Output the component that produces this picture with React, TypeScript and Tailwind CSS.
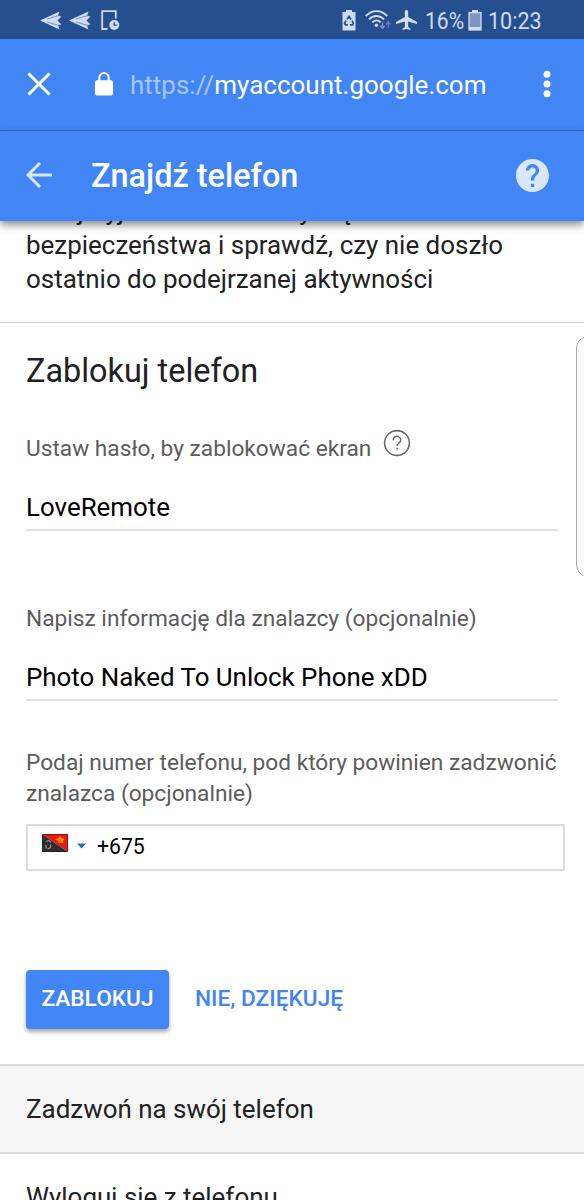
import { useState } from "react";

interface FieldProps {
  label: string;
  value: string;
  onChange: (value: string) => void;
  help?: boolean;
}

function SendIcon() {
  return (
    <svg width="22" height="19" viewBox="0 0 22 19">
      <path d="M0 9.5 19.5 0.5 18 5 21.5 5.5 17.5 9.5 21.5 13.5 18 14 19.5 18.5Z" fill="#cfdcf1" />
      <path d="M7 8 19.5 4.3M7 11 19.5 14.7" stroke="#5f80b4" strokeWidth="0.8" />
    </svg>
  );
}

function DeviceIcon() {
  return (
    <svg width="19" height="21" viewBox="0 0 19 21" fill="none">
      <path d="M6.5 19H1.2V1.2H14.8V8.5" stroke="#cfdcf1" strokeWidth="1.8" />
      <circle cx="13.3" cy="15" r="5" fill="#cfdcf1" />
      <path d="M13.2 12.3V15.2H15.8" stroke="#264f8f" strokeWidth="1.3" />
    </svg>
  );
}

function RecycleBattery() {
  return (
    <svg width="14" height="21" viewBox="0 0 14 21">
      <path d="M4 0H10V2H13.5V20.5H0.5V2H4Z" fill="#cfdcf1" />
      <g stroke="#264f8f" strokeWidth="1.7" fill="none">
        <path d="M4.9 9.4 7 6.4 9.1 9.4" />
        <path d="M10 10.6 11.4 13.2 10.6 14.8H8" />
        <path d="M4 10.6 2.6 13.2 3.4 14.8H6" />
      </g>
    </svg>
  );
}

function WifiIcon() {
  return (
    <svg width="27" height="20" viewBox="0 0 27 20" fill="none">
      <g stroke="#cfdcf1" strokeWidth="1.9">
        <path d="M0.8 6.2C7 -0.6 16 -0.6 22.2 6.2" />
        <path d="M4 9.4C8.5 4.8 14.5 4.8 19 9.4" />
        <path d="M7.3 12.4C10 9.7 13 9.7 15.7 12.4" />
      </g>
      <circle cx="11.4" cy="15.2" r="1.7" fill="#cfdcf1" />
      <path d="M17.5 12.5V18M15.3 15.8 17.5 18.4 19.7 15.8" stroke="#7d98c4" strokeWidth="1.4" />
      <path d="M23.3 18V12M21.1 14.4 23.3 11.8 25.5 14.4" stroke="#5f80b4" strokeWidth="1.4" />
    </svg>
  );
}

function PlaneIcon() {
  return (
    <svg width="21" height="20" viewBox="2 2 19 20" preserveAspectRatio="none">
      <path d="M21 16v-2l-8-5V3.5a1.5 1.5 0 0 0-3 0V9l-8 5v2l8-2.5V19l-2 1.5V22l3.5-1 3.5 1v-1.5L13 19v-5.5z" fill="#cfdcf1" />
    </svg>
  );
}

function BatteryIcon() {
  return (
    <svg width="14" height="21" viewBox="0 0 14 21">
      <path d="M4 0H10V2H13.5V20.5H0.5V2H4Z" fill="#7d95bf" />
      <path d="M4 0H10V2H13.5V20.5H0.5V2H4Z M1.7 3.2V17H12.3V3.2Z" fill="#cfdcf1" fillRule="evenodd" />
    </svg>
  );
}

function Flag() {
  return (
    <svg width="26" height="18" viewBox="0 0 26 18">
      <path d="M0 0H26V18Z" fill="#e61c12" />
      <path d="M0 0V18H26Z" fill="#302f2e" />
      <path d="M13 5.5 16 4.5 18 2 19.5 4 22.5 5 21 7 21.5 9.5 18.5 8.5 16 9 16.5 7Z" fill="#fb8a15" />
      <path d="M4 7.5 7 6.5 9 8.5M8.5 10.5V13.5L5.5 15M3.8 11 4.5 14.5" stroke="#8c8c8c" strokeWidth="1.3" fill="none" />
      <path d="M0.5 0.5H25.5V17.5H0.5Z" fill="none" stroke="#000" strokeOpacity="0.35" />
    </svg>
  );
}

function Field({ label, value, onChange, help }: FieldProps) {
  return (
    <label className="block">
      <span className="flex h-[31px] items-center text-[22.7px] leading-[31px] text-[#5c5c5c]">
        {label}
        {help && (
          <svg width="28" height="28" viewBox="0 0 28 28" fill="none" className="relative -top-[6px] ml-3">
            <circle cx="14" cy="14" r="12.4" stroke="#6a6a6a" strokeWidth="1.6" />
            <path d="M10.3 11.4A3.7 3.7 0 1 1 16.7 13.4C15 14.8 14.1 15.2 14.1 17" stroke="#6a6a6a" strokeWidth="1.5" />
            <path d="M13.3 18.8H14.9V20.4H13.3Z" fill="#6a6a6a" />
          </svg>
        )}
      </span>
      <input
        className="mt-[23px] block h-[44px] w-full border-b-2 border-[#e0e0e0] bg-transparent pb-[2px] text-[25.9px] text-black outline-none"
        value={value}
        onChange={(e) => onChange(e.target.value)}
      />
    </label>
  );
}

export default function App() {
  const [password, setPassword] = useState("LoveRemote");
  const [message, setMessage] = useState("Photo Naked To Unlock Phone xDD");
  const [phone, setPhone] = useState("+675");

  return (
    <div className="relative flex h-[1200px] w-[584px] flex-col overflow-hidden bg-white font-[Roboto,sans-serif] text-[#212121]">
      {/* Status bar */}
      <div className="flex h-[39px] shrink-0 items-center bg-[#264f8f] pl-10 pt-px text-[#cfdcf1]">
        <div className="flex items-center gap-[7px]">
          <SendIcon />
          <SendIcon />
          <span className="ml-[3px]"><DeviceIcon /></span>
        </div>
        <div className="ml-auto flex w-[242px] items-center">
          <RecycleBattery />
          <span className="ml-[9px]"><WifiIcon /></span>
          <span className="ml-[4px]"><PlaneIcon /></span>
          <span className="ml-[8px] w-[38px] origin-left scale-x-[0.86] whitespace-nowrap pt-[2px] text-[24.5px]">16%</span>
          <span className="ml-[5px]"><BatteryIcon /></span>
          <span className="ml-[6px] w-[54px] origin-left scale-x-[0.88] whitespace-nowrap pt-[2px] text-[24.5px]">10:23</span>
        </div>
      </div>

      {/* Address bar */}
      <div className="flex h-[92px] shrink-0 items-center border-b border-[#2f63c0] bg-[#4285f4] pl-[27px] pr-[33px]">
        <svg width="24" height="24" viewBox="0 0 24 24" fill="none" className="-mt-px">
          <path d="M1.5 1.5 22.5 22.5M22.5 1.5 1.5 22.5" stroke="#fff" strokeWidth="3" />
        </svg>
        <svg width="18" height="24" viewBox="0 0 18 24" className="-mt-[2px] ml-[44px]">
          <path d="M4.3 9V5.7a4.7 4.7 0 0 1 9.4 0V9" stroke="#fff" strokeWidth="2" fill="none" />
          <rect y="8.2" width="18" height="15.3" rx="2" fill="#fff" />
        </svg>
        <span className="ml-[17px] whitespace-nowrap pt-[2px] text-[26px] text-white">
          <span className="text-[#a5c6fb]">https://</span>myaccount.google.com
        </span>
        <svg width="8" height="28" viewBox="0 0 8 28" fill="#fff" className="-mt-px ml-auto">
          <circle cx="4" cy="4.2" r="3.5" />
          <circle cx="4" cy="14" r="3.5" />
          <circle cx="4" cy="23.8" r="3.5" />
        </svg>
      </div>

      {/* Page header */}
      <div className="z-10 flex h-[90px] shrink-0 items-center bg-[#4285f4] pb-[2px] pl-[26px] pr-[35px] shadow-[0_4px_8px_rgba(0,0,0,0.45)]">
        <svg width="26" height="26" viewBox="0 0 26 26" fill="none">
          <path d="M26 13H2M14 1 2 13 14 25" stroke="#d9e7fd" strokeWidth="3" />
        </svg>
        <h1 className="ml-[39px] pt-[2px] text-[32.4px] font-medium text-white">Znajdź telefon</h1>
        <svg width="33" height="33" viewBox="2 2 20 20" className="ml-auto">
          <path d="M12 2C6.48 2 2 6.48 2 12s4.48 10 10 10 10-4.48 10-10S17.52 2 12 2zm1 17h-2v-2h2v2zm2.07-7.75l-.9.92C13.45 12.9 13 13.5 13 15h-2v-.5c0-1.1.45-2.1 1.17-2.83l1.24-1.26c.37-.36.59-.86.59-1.41 0-1.1-.9-2-2-2s-2 .9-2 2H8c0-2.21 1.79-4 4-4s4 1.79 4 4c0 .88-.36 1.68-.93 2.25z" fill="#d9e7fd" />
        </svg>
      </div>

      {/* Security tip, partly scrolled under the header */}
      <div className="-mt-[27px] h-[129px] shrink-0 border-b border-[#d2d2d2] px-[26px]">
        <p className="whitespace-nowrap text-[25.95px] leading-[34px]">
          Przejrzyj ustawienia dotyczące
          <br />
          bezpieczeństwa i sprawdź, czy nie doszło
          <br />
          ostatnio do podejrzanej aktywności
        </p>
      </div>

      {/* Lock form */}
      <div className="h-[743px] shrink-0 border-b-2 border-[#dbdbdb] px-[26px] pt-[27px]">
        <h2 className="text-[32.4px] leading-[42px]">Zablokuj telefon</h2>
        <div className="mt-[41px]">
          <Field label="Ustaw hasło, by zablokować ekran" value={password} onChange={setPassword} help />
        </div>
        <div className="mt-[72px]">
          <Field label="Napisz informację dla znalazcy (opcjonalnie)" value={message} onChange={setMessage} />
        </div>
        <p className="mt-[46px] whitespace-nowrap text-[22.7px] leading-[31px] text-[#5c5c5c]">
          Podaj numer telefonu, pod który powinien zadzwonić
          <br />
          znalazca (opcjonalnie)
        </p>
        <div className="mt-[15px] flex h-[47px] w-[539px] items-center border-2 border-[#dcdcdc] pl-[14px]">
          <span className="-mt-[9px]"><Flag /></span>
          <svg width="9" height="6" viewBox="0 0 9 6" className="-mt-[3px] ml-[9px]">
            <path d="M0 0.5H9L4.5 5.5Z" fill="#2f68bd" />
          </svg>
          <input
            className="ml-[11px] w-[300px] bg-transparent pb-[2px] text-[21.2px] text-black outline-none"
            value={phone}
            onChange={(e) => setPhone(e.target.value)}
          />
        </div>
        <div className="mt-[99px] flex items-center">
          <button className="h-[59px] w-[143px] rounded bg-[#4285f4] pb-px text-[22.7px] font-medium text-white shadow-[0_3px_4px_rgba(0,0,0,0.35)]">
            ZABLOKUJ
          </button>
          <button className="ml-[26px] whitespace-nowrap pb-px text-[22.7px] font-medium text-[#4285f4]">NIE, DZIĘKUJĘ</button>
        </div>
      </div>

      {/* Other actions */}
      <div className="flex h-[88px] shrink-0 items-center border-b-2 border-[#dbdbdb] bg-[#f6f6f6] px-[26px] text-[25.95px]">
        Zadzwoń na swój telefon
      </div>
      <div className="flex h-[86px] shrink-0 items-center px-[26px] text-[25.95px]">Wyloguj się z telefonu</div>

      {/* Edge panel handle */}
      <div className="absolute left-[576px] top-[336px] h-[241px] w-[24px] rounded-[12px] border border-[#aaa] bg-[#fafafa]" />
    </div>
  );
}
